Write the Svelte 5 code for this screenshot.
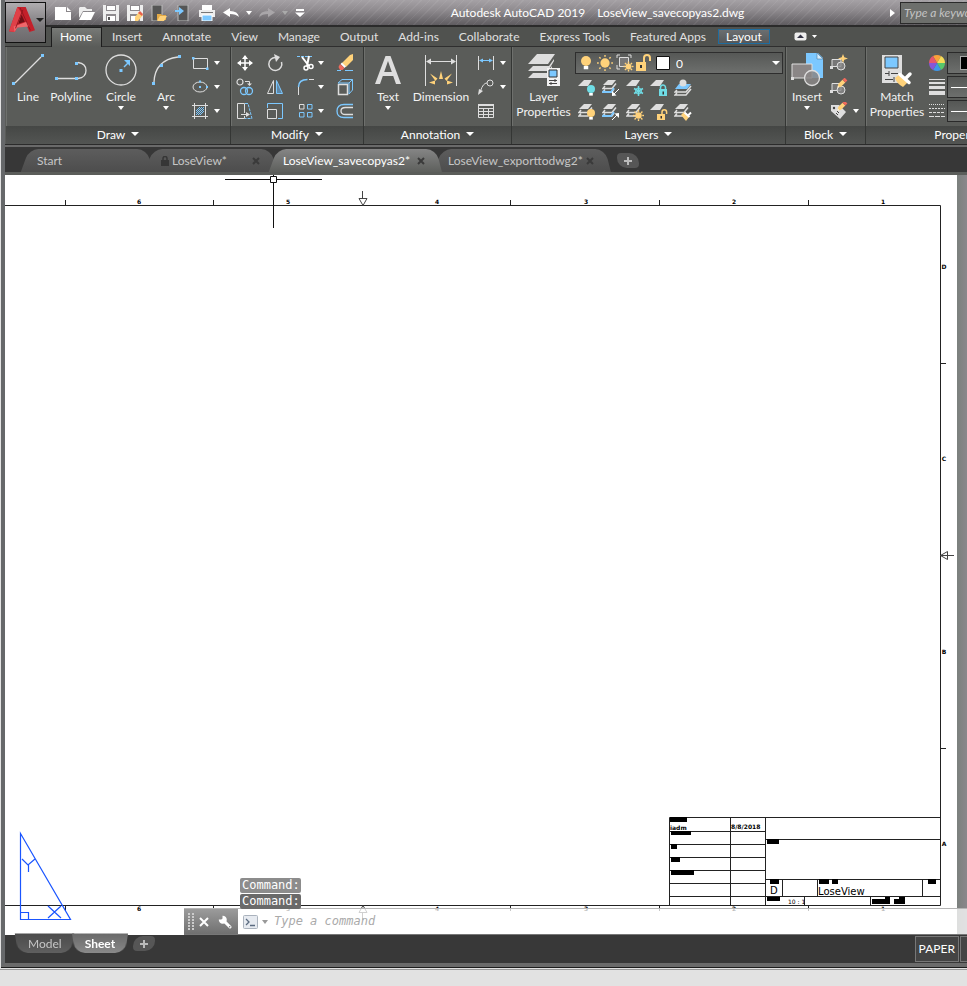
<script>
    const L = "#dedede";
    const B = "#7cc8ff";
    const Y = "#ffd27a";
    const T = "#6fdde6";

    // sheet stack used by most of the layer icons
    const sheets = `<path d="M6 1h8l-4 5H1z" fill="${L}"/><path d="M3 7L1 9.500h9l4-5" fill="none" stroke="${L}" stroke-width="1.500"/><path d="M3 10.500L1 13h9l2-3" fill="none" stroke="${L}" stroke-width="1.500"/>`;
    const sheet = `<path d="M6 1h8l-4 6H0z" fill="${L}"/>`;
    const sunRays = (x, y, r) =>
        [0, 45, 90, 135, 180, 225, 270, 315]
            .map((a) => `<rect x="${x - 0.7}" y="${y - r}" width="1.4" height="1.8" transform="rotate(${a} ${x} ${y})"/>`)
            .join("");
    const sun = (x, y, r) => `<g fill="${Y}"><circle cx="${x}" cy="${y}" r="${r * 0.58}"/>${sunRays(x, y, r)}</g>`;
    const bulb = (x, y, r, c) =>
        `<circle cx="${x}" cy="${y}" r="${r}" fill="${c}"/><rect x="${x - r * 0.45}" y="${y + r}" width="${r * 0.9}" height="${r * 0.65}" fill="#fff"/>`;
    const pencil = (x, y) =>
        `<g transform="translate(${x} ${y}) rotate(45)"><path d="M-2 3h4v6l-2 3-2-3z" fill="${Y}"/><path d="M-2 0h4v3h-4z" fill="#f06a5c"/><path d="M-1 10.500h2L0 12z" fill="#fff"/></g>`;
    const blockShape = `<path d="M2 5.500h9v7H2z" fill="#777" stroke="${L}"/><circle cx="11" cy="12" r="4" fill="#8a8a8a" fill-opacity=".8" stroke="${L}"/><rect x="0" y="12" width="3" height="3" fill="${L}"/>`;

    const small = {
        rect: `<path d="M2.500 4.500h14v10h-14z" fill="none" stroke="${L}"/><path d="M1 3h2.500v2.500H1zM15 13.500h2.500V16H15z" fill="${B}"/>`,
        ellipse: `<ellipse cx="9" cy="9" rx="7" ry="5" fill="none" stroke="${L}"/><path d="M8 2.500h2v2H8zM8 8h2v2H8zM15 8h2v2h-2z" fill="${B}"/>`,
        hatch: `<path d="M1 3.500h16M1 14.500h16M3.500 1v16M14.500 1v16" stroke="${L}"/><path d="M5 9l4-4M5 13l8-8M9 13l4-4M5 11l6-6M7 13l6-6" stroke="${B}"/>`,
        move: `<path d="M9 2v14M2 9h14" stroke="#fff" stroke-width="1.500"/><path d="M9 1l3 4H6zM9 17l3-4H6zM1 9l4-3v6zM17 9l-4-3v6z" fill="#fff"/>`,
        rotate: `<path d="M10 3.500A6.500 6.500 0 1 0 15.500 8" fill="none" stroke="${L}" stroke-width="1.500"/><path d="M8 0l6 3-4 5z" fill="${L}"/>`,
        trim: `<path d="M0 2.500h16" stroke="${B}" stroke-dasharray="3 1"/><path d="M5 3l7 9M12 2l-2 10" stroke="#fff" stroke-width="2"/><circle cx="9" cy="14" r="2" fill="none" stroke="#fff" stroke-width="1.500"/><circle cx="14" cy="12.500" r="2" fill="none" stroke="#fff" stroke-width="1.500"/>`,
        erase: `<path d="M17 0v6l-7 7-4-4 8-8z" fill="${Y}"/><path d="M6 8.500l4 4-1.500 1.500-4-4z" fill="#fff"/><path d="M4 10l4.500 4-2 2H4l-1.500-3z" fill="#f06a5c"/><path d="M1 16.500h4M9 16.500h8" stroke="${B}"/>`,
        copy: `<circle cx="4" cy="4" r="3" fill="none" stroke="${L}" stroke-width="1.200"/><path d="M9 3.500h4.500V6" fill="none" stroke="${L}"/><path d="M11 5.500h5L13.500 8z" fill="${L}"/><g fill="none" stroke="${B}" stroke-width="1.300"><circle cx="8" cy="13" r="3.500"/><circle cx="13" cy="13" r="3.500"/></g>`,
        mirror: `<path d="M7.500 2.500v13H1.500z" fill="none" stroke="${L}"/><path d="M10.500 2.500v13h6z" fill="#5f87a6" stroke="${B}"/>`,
        fillet: `<path d="M1.500 9v8M12 1.500h5" stroke="${L}"/><path d="M1.500 9q0-7.500 9-7.500" fill="none" stroke="${B}" stroke-width="1.500"/>`,
        box: `<path d="M2.500 6.500h9v10h-9z" fill="none" stroke="${L}" stroke-width="1.500"/><path d="M2 5l4-3.500h10.500V12L13 16M2 5h11v11M13 5l3.500-3.500" fill="none" stroke="${B}"/>`,
        stretch: `<path d="M8.500 11V1.500h-7v15h7V14" fill="none" stroke="${L}"/><path d="M5 12.500h6" stroke="${L}"/><path d="M10 10l4 2.500-4 2.500z" fill="${L}"/><path d="M9 1.500h3l4 15H9" fill="none" stroke="${B}" stroke-dasharray="3 1"/>`,
        scale: `<path d="M1.500 6V1.500h15v15H12" fill="none" stroke="${B}"/><path d="M1.500 7.500h9v9h-9z" fill="none" stroke="${L}"/>`,
        array: `<g fill="none"><path d="M2.500 2.500h4.500v4.500h-4.500z" stroke="${L}"/><path d="M10.500 2.500h4.500v4.500h-4.500zM2.500 10.500h4.500v4.500h-4.500zM10.500 10.500h4.500v4.500h-4.500z" stroke="${B}"/></g>`,
        offset: `<path d="M17 2.500H8q-7 0-7 6.500t7 6.500h9" fill="none" stroke="${B}" stroke-width="1.300"/><path d="M17 5.500H9.500Q5 5.500 5 9t4.500 3.500H17" fill="none" stroke="${L}" stroke-width="1.300"/>`,
        linear: `<path d="M1.500 2v14M16.500 2v14" stroke="${L}"/><path d="M3 6.500h12" stroke="${B}"/><path d="M2 6.500l4-2v4zM16 6.500l-4-2v4z" fill="${B}"/>`,
        leader: `<circle cx="13" cy="5" r="3" fill="none" stroke="${L}"/><path d="M10 5Q6 5 3.500 13" fill="none" stroke="${L}"/><path d="M1 17l1-6 4 2z" fill="${L}"/>`,
        table: `<path d="M1.500 2.500h15v13h-15zM1.500 6.500h15M1.500 9.500h15M1.500 12.500h15M6.500 6v9M11.500 6v9" fill="none" stroke="${L}"/><path d="M1 2h16v2H1z" fill="${L}"/>`,
        layOff: `${sheet}${bulb(13, 10, 4, T)}`,
        layIso: `${sheets}<path d="M2 11.500L1 13h8l3-4" fill="none" stroke="${B}" stroke-width="1.800"/><path d="M17 10l-5 5" stroke="#fff"/><path d="M10 17v-5l4.500 4.500z" fill="#fff"/>`,
        layFreeze: `${sheet}<path d="M12.500 7v10M8 9.500l9 5M17 9.500l-9 5" stroke="${T}" stroke-width="1.500"/><circle cx="12.500" cy="12" r="3" fill="none" stroke="${T}"/>`,
        layLock: `${sheet}<path d="M9 10h8v7H9z" fill="${T}"/><path d="M10.500 10V8.500a2.500 2.500 0 0 1 5 0V10" fill="none" stroke="${T}" stroke-width="1.500"/><path d="M12.500 12.500h1.500v3h-1.500z" fill="#333"/>`,
        layCur: `<path d="M5 5h12l-4 5H1z" fill="${B}"/><path d="M3 11l-2 2h11l5-6M3 14l-2 2h11l5-6" fill="none" stroke="${L}" stroke-width="1.500"/><circle cx="9" cy="4" r="3.500" fill="${L}"/>`,
        layOn: `${sheets}${bulb(13, 10, 4, Y)}`,
        layUniso: `${sheets}<path d="M2 11.500L1 13h8l3-4" fill="none" stroke="${B}" stroke-width="1.800"/><path d="M10 17l5-5" stroke="#fff"/><path d="M17 10v5l-4.500-4.500z" fill="#fff"/>`,
        layThaw: `${sheets}${sun(12.5, 12.5, 5.5)}`,
        layUnlock: `${sheet}<path d="M7 11h8v6H7z" fill="${Y}"/><path d="M12 11V9a2.300 2.300 0 0 1 4.600 0v2" fill="none" stroke="${Y}" stroke-width="1.500"/><path d="M10.500 13h1.500v2.500h-1.500z" fill="#333"/>`,
        layMatch: `${sheets}<path d="M7 12l3-3 5 5-3 4z" fill="${Y}"/><path d="M10.500 9.500l5 4.500M14.500 12l2.500-2.500" stroke="#fff" stroke-width="2"/>`,
        blockNew: `${blockShape}<path d="M13 0l1.300 3.200L18 4.500l-3.700 1.300L13 9l-1.300-3.200L8 4.500l3.700-1.300z" fill="${Y}"/>`,
        blockEdit: `${blockShape}${pencil(16, 1)}`,
        blockAttr: `<path d="M1 3h8l7 7-6 7-9-8z" fill="${L}"/><circle cx="4" cy="6" r="1.200" fill="#444"/><path d="M7 9l2 2M6 11l2 2" stroke="#444"/>${pencil(16, 0)}`,
        wheel: [
            ["#f9a13a", 0], ["#f7dc57", 60], ["#e4566e", -60], ["#58c66b", 120], ["#3f97e8", 180], ["#8656d8", 240],
        ].map(([c, a]) => `<path d="M9 9V1a8 8 0 0 1 6.930 4z" fill="${c}" transform="rotate(${a - 30} 9 9)"/>`).join(""),
        weights: `<path d="M1 1h16v1H1zM1 4h16v2H1zM1 8h16v3H1zM1 13h16v4H1z" fill="${L}"/>`,
        types: `<g stroke="${L}" stroke-width="1.200"><path d="M1 2.500h16" stroke-dasharray="1 1"/><path d="M1 6.500h16" stroke-dasharray="2 1"/><path d="M1 10.500h16" stroke-dasharray="3 1"/><path d="M1 14.500h16" stroke-dasharray="5 1"/></g>`,
        bulb: bulb(8, 7, 5, Y),
        sun: sun(8, 9, 8),
        vpSun: `<path d="M1 4V1h3M12 1h3v3M1 11v4h3" fill="none" stroke="${L}"/><path d="M3.500 3.500h9v9h-9z" fill="#777" stroke="${L}"/>${sun(12.5, 12.5, 5)}`,
        unlock: `<path d="M1 8h10v9H1z" fill="${Y}"/><path d="M9 8V4a3 3 0 0 1 6 0v3" fill="none" stroke="${Y}" stroke-width="2"/><path d="M5 11h2v3H5z" fill="#333"/>`,
        swatch: `<path d="M2.500 2.500h13v13h-13z" fill="#fff" stroke="#111"/>`,
    };

    const big = {
        line: `<path d="M3 29L29 3" stroke="${L}" stroke-width="1.300"/><path d="M0 28h3v3H0zM29 0h3v3h-3z" fill="${B}"/>`,
        polyline: `<path d="M3 24.500h17M23 8.500q8 1 8 8t-8 8" fill="none" stroke="${L}" stroke-width="1.300"/><path d="M0 23h3v3H0zM20 23h3v3h-3zM20 8h3v3h-3z" fill="${B}"/>`,
        circle: `<circle cx="16" cy="16" r="15" fill="none" stroke="${L}" stroke-width="1.300"/><path d="M19 13l4-4" stroke="${B}" stroke-width="1.500"/><path d="M25 6v6l-6-6zM14.500 15h3v3h-3z" fill="${B}"/>`,
        arc: `<path d="M4 28Q5 6 28 3" fill="none" stroke="${L}" stroke-width="1.300"/><path d="M2 28h3v3H2zM10 10h3v3h-3zM28 1h3v3h-3z" fill="${B}"/>`,
        text: `<path d="M3 30L13.500 2h5L29 30h-5l-2.800-8H10.800L8 30zM12.200 18h7.600L16 7z" fill="${L}"/>`,
        dimension: `<path d="M.5 1v31M31.500 1v31" stroke="${L}"/><path d="M4 7.500h24" stroke="${L}"/><path d="M1 7.500l5-3v6zM31 7.500l-5-3v6z" fill="${L}"/><g fill="${Y}"><path d="M14 25l2-8 2 8zM10.500 27L5 19.500l7.500 5zM21.500 27l5.500-7.500-7.500 5zM10 30.500l-6-2 6-2zM22 30.500l6-2-6-2z"/></g>`,
        layers: `<path d="M9 0h18l-7 10H0z" fill="${L}"/><path d="M5 12h16l5-7v2l-6 10H0z" fill="${L}"/><path d="M5 19h14l5-7v4l-4 8H0z" fill="${L}"/><path d="M19 14h13v18H19z" fill="#f2f2f2"/><path d="M21 16h8v7h-8z" fill="${B}" stroke="#333"/><path d="M21 26.500h8M21 29.500h8M27 25v3M23 28v3" stroke="#444"/>`,
        insert: `<path d="M15-1h12l5 5v20H15z" fill="${B}"/><path d="M26-1v6h6z" fill="#d9efff" stroke="#4a7aa0" stroke-width=".6"/><path d="M1 10h20v14H1z" fill="#8a8686" stroke="${L}"/><circle cx="21" cy="24" r="7.500" fill="#8a8686" fill-opacity=".85" stroke="${L}" stroke-width="1.300"/><path d="M0 23h3v3H0z" fill="${L}"/>`,
        match: `<path d="M1 1h20v28H1z" fill="${L}"/><path d="M4 3h13v11H4z" fill="${B}" stroke="#444"/><path d="M4 19.500h4M10 19.500h7M4 25.500h8M8 17v5M13 23v5" stroke="#444"/><path d="M14 24l5-4 8 8-5 5q-6-3-8-9z" fill="${Y}"/><path d="M19 20.500l9 8M25 24l4-4" stroke="#fff" stroke-width="3.500" stroke-linecap="round"/>`,
    };

    const qat = {
        New: `<path d="M0 2h11v5h5v8H0z" fill="#fff"/><path d="M12 2l4 4h-4z" fill="#fff"/>`,
        Open: `<path d="M0 3l1-1h5l2 2h5v2H4L0 13z" fill="#eee"/><path d="M4 7h12l-4 8H0z" fill="#fff"/>`,
        Save: `<path d="M0 0h16v16H0z" fill="#eee"/><path d="M3 0h10v6H3zM3 9h10v7H3z" fill="#8e8a8e"/><path d="M4 1h8v4H4zM4 11h8v5H4z" fill="#fff"/><path d="M5 12h2v3H5z" fill="#555"/>`,
        "Save As": `<path d="M0 0h16v16H0z" fill="#eee"/><path d="M3 0h10v6H3zM3 9h10v7H3z" fill="#8e8a8e"/><path d="M4 1h8v4H4zM4 11h6v5H4z" fill="#fff"/><path d="M12 7l4 3-5 6H8v-4z" fill="${Y}"/><path d="M13 6l3 3-1 2-4-3z" fill="#e8604c"/>`,
        "Open from Mobile": `<path d="M1 0h10v16H1z" fill="#555" stroke="#bbb"/><path d="M6 9h4l1 1h4v5H6z" fill="#e3a945"/><path d="M9 11h7l-3 5H6z" fill="${Y}"/>`,
        "Save to Mobile": `<path d="M3 0h10v16H3z" fill="#555" stroke="#bbb"/><path d="M0 5h4V2l5 4-5 4V7H0z" fill="${B}"/>`,
        Plot: `<path d="M3 0h10v5H3z" fill="#fff"/><path d="M0 5h16v7H0z" fill="#eee"/><path d="M2 7h12v1H2z" fill="#777"/><path d="M3 10h10v6H3z" fill="${B}" stroke="#fff"/>`,
        Undo: `<path d="M7 3v3q8 0 9 6-3-3-9-3v3L0 7.500z" fill="#fff"/>`,
        Redo: `<path d="M9 3v3q-8 0-9 6 3-3 9-3v3l7-4.500z" fill="#a9a6a9"/>`,
    };

    const menuTabs = ["Home", "Insert", "Annotate", "View", "Manage", "Output", "Add-ins", "Collaborate", "Express Tools", "Featured Apps", "Layout"];
    const fileTabs = [
        { name: "Start" },
        { name: "LoseView*", locked: true, closable: true },
        { name: "LoseView_savecopyas2*", active: true, closable: true },
        { name: "LoseView_exporttodwg2*", closable: true },
    ];

    // name, label, has a drop-down arrow
    const drawTools = [["rect", "Rectangle", 1], ["ellipse", "Ellipse", 1], ["hatch", "Hatch", 1]];
    const modifyTools = [
        ["move", "Move"], ["rotate", "Rotate"], ["trim", "Trim", 1], ["erase", "Erase"],
        ["copy", "Copy"], ["mirror", "Mirror"], ["fillet", "Fillet", 1], ["box", "Explode"],
        ["stretch", "Stretch"], ["scale", "Scale"], ["array", "Array", 1], ["offset", "Offset"],
    ];
    const annotationTools = [["linear", "Linear", 1], ["leader", "Leader", 1], ["table", "Table"]];
    const layerTools = [
        ["layOff", "Off"], ["layIso", "Isolate"], ["layFreeze", "Freeze"], ["layLock", "Lock"], ["layCur", "Make Current"],
        ["layOn", "Turn All On"], ["layUniso", "Unisolate"], ["layThaw", "Thaw"], ["layUnlock", "Unlock"], ["layMatch", "Match Layer"],
    ];
    const blockTools = [["blockNew", "Create"], ["blockEdit", "Edit"], ["blockAttr", "Edit Attributes", 1]];

    const zonesX = [[139, "6"], [288, "5"], [437, "4"], [586, "3"], [734, "2"], [883, "1"]];
    const ticksX = [66, 214, 511, 660, 809];
    const zonesY = [[267, "D"], [459, "C"], [652, "B"], [844, "A"]];
    const blackouts = [
        [670, 817, 17, 5], [671, 831, 20, 4], [671, 844, 6, 5], [671, 857, 9, 5], [671, 870, 23, 5],
        [767, 839, 12, 5], [770, 879, 9, 5], [819, 879, 10, 5], [832, 879, 6, 5], [928, 879, 8, 5],
        [767, 897, 13, 4], [872, 899, 18, 5], [885, 897, 5, 3], [894, 899, 11, 5], [899, 897, 6, 3],
    ];
</script>

{#snippet arrow()}
    <svg class="arrow" viewBox="0 0 6 4" aria-hidden="true"><path d="M0 0h6L3 4z" /></svg>
{/snippet}

{#snippet smallIcon(name)}
    <svg class="icon" viewBox="0 0 18 18" aria-hidden="true">{@html small[name]}</svg>
{/snippet}

{#snippet tool([name, label, menu])}
    <button class="tool" aria-label={label}>
        {@render smallIcon(name)}
        {#if menu}{@render arrow()}{/if}
    </button>
{/snippet}

{#snippet bigTool(name, label, menu)}
    <button class="big">
        <svg viewBox="0 0 32 32" aria-hidden="true">{@html big[name]}</svg>
        <span>{label}</span>
        {#if menu}{@render arrow()}{/if}
    </button>
{/snippet}

{#snippet panelTitle(label)}
    <button class="panel-title">{label}<svg viewBox="0 0 8 4" aria-hidden="true"><path d="M0 0h8L4 4z" /></svg></button>
{/snippet}

<div class="page">
    <div class="window">
        <header class="title-bar">
            <div class="qat">
                {#each Object.entries(qat) as [label, art]}
                    <button class="qat-button" aria-label={label}>
                        <svg viewBox="0 0 16 16" aria-hidden="true">{@html art}</svg>
                    </button>
                    {#if label == "Undo" || label == "Redo"}
                        <button class="qat-arrow" class:dim={label == "Redo"} aria-label="{label} list">{@render arrow()}</button>
                    {/if}
                {/each}
                <button class="qat-menu" aria-label="Customize toolbar">
                    <svg viewBox="0 0 10 8" aria-hidden="true"><path d="M1 0h8v2H1zM0 3.500h10L5 8z" fill="#fff" /></svg>
                </button>
            </div>
            <h1><span>Autodesk AutoCAD 2019</span><span>LoseView_savecopyas2.dwg</span></h1>
            <svg class="play" viewBox="0 0 5 8" aria-hidden="true"><path d="M0 0l5 4-5 4z" fill="#fff" /></svg>
            <input class="search" type="text" aria-label="Search" placeholder="Type a keyword or phrase" />
        </header>

        <button class="app-button" aria-label="Application menu">
            <svg viewBox="0 0 28 30" aria-hidden="true">
                <path d="M9 1h9l10 25-6 2-3-7-10 2-3 5-6-1z" fill="#c4202a" />
                <path d="M13 8l4 9-7 2z" fill="#6e1016" />
                <path d="M9 1L0 27l6 1 8-20z" fill="#e04048" />
                <path d="M5 22l14-5 3 5-13 1-3 5z" fill="#f0666a" />
                <path d="M12 2l11 24M15 4l-8 20" stroke="#8f151d" stroke-width="1" />
            </svg>
            <svg class="app-arrow" viewBox="0 0 8 4" aria-hidden="true"><path d="M0 0h8L4 4z" /></svg>
        </button>

        <nav class="menu">
            {#each menuTabs as tab}
                <button class:home={tab == "Home"} class:context={tab == "Layout"}>{tab}</button>
            {/each}
            <button class="minimize" aria-label="Minimize ribbon">
                <svg viewBox="0 0 24 9" aria-hidden="true">
                    <rect x=".5" y=".5" width="12" height="8" rx="2" fill="#eee" />
                    <path d="M3 6h7L6.500 2.500z" fill="#334" />
                    <path d="M18 3h5l-2.500 3z" fill="#fff" />
                </svg>
            </button>
        </nav>

        <div class="ribbon">
            <section class="panel draw">
                <div class="body">
                    {@render bigTool("line", "Line")}
                    {@render bigTool("polyline", "Polyline")}
                    {@render bigTool("circle", "Circle", true)}
                    {@render bigTool("arc", "Arc", true)}
                    <div class="tools">
                        {#each drawTools as item}{@render tool(item)}{/each}
                    </div>
                </div>
                {@render panelTitle("Draw")}
            </section>
            <section class="panel modify">
                <div class="body">
                    {#each modifyTools as item}{@render tool(item)}{/each}
                </div>
                {@render panelTitle("Modify")}
            </section>
            <section class="panel annotation">
                <div class="body">
                    {@render bigTool("text", "Text", true)}
                    {@render bigTool("dimension", "Dimension")}
                    <div class="tools">
                        {#each annotationTools as item}{@render tool(item)}{/each}
                    </div>
                </div>
                {@render panelTitle("Annotation")}
            </section>
            <section class="panel layers">
                <div class="body">
                    {@render bigTool("layers", "Layer Properties")}
                    <div>
                        <div class="combo">
                            {#each ["bulb", "sun", "vpSun", "unlock", "swatch"] as name}{@render smallIcon(name)}{/each}
                            <select aria-label="Layer"><option>0</option></select>
                            <svg class="combo-arrow" viewBox="0 0 8 4" aria-hidden="true"><path d="M0 0h8L4 4z" /></svg>
                        </div>
                        <div class="layer-tools">
                            {#each layerTools as item}{@render tool(item)}{/each}
                        </div>
                    </div>
                </div>
                {@render panelTitle("Layers")}
            </section>
            <section class="panel block">
                <div class="body">
                    {@render bigTool("insert", "Insert", true)}
                    <div class="tools">
                        {#each blockTools as item}{@render tool(item)}{/each}
                    </div>
                </div>
                {@render panelTitle("Block")}
            </section>
            <section class="panel properties">
                <div class="body">
                    {@render bigTool("match", "Match Properties")}
                    <div class="tools">
                        {#each ["wheel", "weights", "types"] as name}
                            <div class="prop">
                                {@render smallIcon(name)}
                                <button class="prop-box" class:color={name == "wheel"} aria-label={name}><i></i></button>
                            </div>
                        {/each}
                    </div>
                </div>
                {@render panelTitle("Properties")}
            </section>
        </div>

        <nav class="file-tabs">
            {#each fileTabs as tab}
                <div class="file-tab" class:active={tab.active} class:locked={tab.locked}>
                    {#if tab.locked}
                        <svg class="lock" viewBox="0 0 8 10" aria-hidden="true">
                            <path d="M0 4h8v6H0z" fill="#363636" /><path d="M2 4V2.500a2 2 0 0 1 4 0V4" fill="none" stroke="#363636" stroke-width="1.500" />
                        </svg>
                    {/if}
                    <button class="file-name">{tab.name}</button>
                    {#if tab.closable}
                        <button class="close" aria-label="Close {tab.name}">
                            <svg viewBox="0 0 8 8" aria-hidden="true"><path d="M1 1l6 6M7 1l-6 6" stroke="#3a3a3a" stroke-width="2" /></svg>
                        </button>
                    {/if}
                </div>
            {/each}
            <button class="plus" aria-label="New drawing"><svg viewBox="0 0 8 8" aria-hidden="true"><path d="M4 0v8M0 4h8" stroke="#bbb" stroke-width="2" /></svg></button>
        </nav>

        <main class="canvas">
            <svg class="sheet" viewBox="5 175 952 760" aria-label="Drawing sheet">
                <g fill="none" stroke="#222">
                    <path d="M5 205.500h935.500V905.500H5" />
                    {#each ticksX as x}
                        <path d="M{x - 0.5} 200v5M{x - 0.5} 906v5" />
                    {/each}
                    <path d="M941 363.500h5M941 748.500h5" />
                    <path d="M669.500 905V817.500H940M669.500 831.500h96M669.500 844.500h96M669.500 857.500h96M669.500 870.500h96M669.500 883.500h96M669.500 896.500H940M730.500 818v87M765.500 818v87M766 839.500h174M766 879.500h174M782.500 880v16M817.500 880v16M922.500 880v16M804.500 897v8M870.500 897v8" />
                </g>
                <g fill="none" stroke="#444">
                    <path d="M362.500 191v8M359 198.500h8l-4 7z" />
                    <path d="M362.500 920v-8M359 912.500h8l-4-7z" />
                    <path d="M954 555.500h-14M947.500 551.500v8l-7-4z" />
                </g>
                <g class="zone">
                    {#each zonesX as [x, label]}
                        <text x={x} y="204">{label}</text>
                        <text x={x} y="911">{label}</text>
                    {/each}
                    {#each zonesY as [y, label]}
                        <text x="944" y={y + 2}>{label}</text>
                    {/each}
                </g>
                {#each blackouts as [x, y, w, h]}
                    <rect {x} {y} width={w} height={h} />
                {/each}
                <text class="cad tiny" x="670" y="830">iadm</text>
                <text class="cad tiny" x="731" y="829">8/8/2018</text>
                <text class="cad tiny plain" x="788" y="904">10 : 1</text>
                <text class="cad" x="770" y="894">D</text>
                <text class="cad" x="818" y="895">LoseView</text>
                <g fill="none" stroke="#1a55ff" stroke-width="1.200">
                    <path d="M20.500 833.500L70.500 919.500H20.500zM20.500 912.500h8v7M22 859l6 6 7-6M28.500 865v7M48 906l13 12M61 906l-13 12" />
                </g>
                <path d="M225 179.500h97M273.500 175v53" stroke="#111" />
                <path d="M270.500 176.500h6v6h-6z" fill="#fff" stroke="#111" />
            </svg>
            <div class="scrollbar"></div>

            <div class="command">
                <div class="history">
                    <span>Command:</span>
                    <span class="last">Command:</span>
                </div>
                <div class="command-line">
                    <div class="grip">
                        <svg class="dots" viewBox="0 0 6 18" aria-hidden="true"><path d="M1 0v18M5 0v18" stroke="#ccc" stroke-width="2" stroke-dasharray="2 1" /></svg>
                        <button aria-label="Close command line"><svg viewBox="0 0 10 10" aria-hidden="true"><path d="M1 1l8 8M9 1L1 9" stroke="#fff" stroke-width="2" /></svg></button>
                        <button class="wrench" aria-label="Customize">
                            <svg viewBox="0 0 14 14" aria-hidden="true"><path d="M5 5l7 7" stroke="#fff" stroke-width="3" stroke-linecap="round" /><path d="M4.500 4.500V.8A4 4 0 1 1 .8 4.500z" fill="#fff" /><circle cx="11.700" cy="11.700" r=".8" fill="#777" /></svg>
                        </button>
                    </div>
                    <button class="prompt" aria-label="Recent commands">
                        <svg class="term" viewBox="0 0 15 14" aria-hidden="true"><rect x=".5" y=".5" width="14" height="13" rx="1" fill="#e6eaf0" stroke="#aab2bd" /><path d="M3 4l3 3-3 3M7 10.500h5" fill="none" stroke="#5b6b80" stroke-width="1.300" /></svg>
                        {@render arrow()}
                    </button>
                    <input type="text" aria-label="Command" placeholder="Type a command" />
                </div>
            </div>
        </main>

        <footer class="layout-bar">
            <div class="layout-tabs">
                <button class="layout-tab">Model</button>
                <button class="layout-tab active">Sheet</button>
                <button class="plus low" aria-label="New layout"><svg viewBox="0 0 8 8" aria-hidden="true"><path d="M4 0v8M0 4h8" stroke="#bbb" stroke-width="2" /></svg></button>
            </div>
            <div class="status">
                <button>PAPER</button>
                <button class="cut" aria-label="Quick view"></button>
            </div>
        </footer>
    </div>
    <div class="desktop"></div>
</div>

<style>
    :global(body) {
        margin: 0;
        background: #e2e2e2;
    }
    .page {
        display: flex;
        flex-direction: column;
        min-height: 100vh;
        overflow: hidden;
        font-family: Lato, "Open Sans", sans-serif;
        font-size: 12px;
        color: #eee;
    }
    .window {
        position: relative;
        flex: 1;
        display: flex;
        flex-direction: column;
        border-left: 4px solid #66686a;
        border-bottom: 4px solid #6b6b6b;
        box-shadow: 0 1px 0 #1c1c1c, inset 1px 0 0 #2b2b2b;
        margin-left: 1px;
        min-width: 0;
    }
    .desktop {
        height: 16px;
        margin-top: 2px;
        border-top: 1px solid #999;
        background: #e2e2e2;
    }
    button,
    input,
    select {
        font: inherit;
        color: inherit;
        background: none;
        border: 0;
        padding: 0;
        margin: 0;
    }
    svg {
        display: block;
        flex: none;
    }
    .arrow {
        width: 6px;
        height: 4px;
        fill: #fff;
    }

    .title-bar {
        display: flex;
        align-items: center;
        height: 25px;
        padding-left: 50px;
        border-bottom: 2px solid #2b2b2b;
        background:
            repeating-linear-gradient(135deg, rgba(255, 255, 255, 0.06) 0 1px, transparent 1px 6px),
            linear-gradient(#a5a1a5, #8f8b8f 40%, #5f5c60);
    }
    .qat {
        display: flex;
        align-items: center;
        gap: 8px;
    }
    .qat-button svg {
        width: 16px;
        height: 16px;
    }
    .qat-arrow {
        margin: 0 -1px;
    }
    .dim .arrow {
        fill: #aaa;
    }
    .qat-menu svg {
        width: 10px;
        height: 8px;
    }
    h1 {
        flex: 1;
        display: flex;
        justify-content: center;
        gap: 12px;
        margin: 0;
        font-size: 12px;
        font-weight: 400;
        white-space: nowrap;
        color: #fff;
    }
    .play {
        width: 5px;
        height: 8px;
        margin-right: 5px;
    }
    .search {
        box-sizing: border-box;
        width: 67px;
        height: 22px;
        padding-left: 3px;
        border: 1px solid #2a2a2a;
        border-right: 0;
        background: #6d6f6c;
        font-style: italic;
    }
    .search::placeholder {
        color: #c4c4c4;
        opacity: 1;
    }
    .app-button {
        position: absolute;
        left: 0;
        top: 2px;
        z-index: 2;
        display: flex;
        align-items: center;
        gap: 1px;
        box-sizing: border-box;
        width: 41px;
        height: 41px;
        padding: 0 2px 6px 3px;
        border: 1px solid #111;
        background: linear-gradient(#b0adb0, #7c797c 60%, #6c6a6c);
    }
    .app-button svg {
        width: 26px;
        height: 28px;
    }
    .app-button .app-arrow {
        width: 8px;
        height: 4px;
        fill: #222;
    }

    .menu {
        display: flex;
        align-items: center;
        height: 19px;
        padding-left: 46px;
        background: #50524f;
        border-bottom: 1px solid #2f2f2f;
        white-space: nowrap;
    }
    .menu button {
        height: 18px;
        padding: 0 10px;
        color: #e0e0e0;
    }
    .menu .home {
        height: 20px;
        padding: 0 9px 2px 8px;
        border: 1px solid #1d1d1d;
        border-bottom: 0;
        background: linear-gradient(#777976, #5a5c59);
        color: #fff;
    }
    .menu .context {
        height: 15px;
        line-height: 13px;
        margin: 0 2px;
        padding: 0 7px;
        border: 1px solid #1f6c9e;
        background: linear-gradient(#6b6e70, #55585a);
        color: #fff;
    }
    .menu .minimize {
        padding: 0 22px;
    }
    .minimize svg {
        width: 24px;
        height: 9px;
    }

    .ribbon {
        display: flex;
        height: 97px;
        padding-left: 1px;
        overflow: hidden;
        background: #5a5c59;
        border-bottom: 1px solid #2b2b2b;
    }
    .panel {
        flex: none;
        display: flex;
        flex-direction: column;
        box-sizing: border-box;
        border-right: 1px solid #343634;
        box-shadow: inset 1px 0 0 #6e706d;
    }
    .body {
        flex: 1;
        display: grid;
        align-content: start;
    }
    .panel-title {
        display: flex;
        align-items: center;
        justify-content: center;
        gap: 6px;
        box-sizing: border-box;
        height: 18px;
        padding-bottom: 2px;
        background: linear-gradient(#454745, #535553);
        color: #fff;
    }
    .panel-title svg {
        width: 8px;
        height: 4px;
        fill: #fff;
    }
    .draw {
        width: 225px;
    }
    .draw .body {
        grid-template-columns: 36px 50px 50px 40px 34px;
        padding-left: 4px;
    }
    .draw .tools {
        padding-left: 5px;
    }
    .modify {
        width: 133px;
    }
    .modify .body {
        grid-template-columns: 30px 31px 39px 18px;
        padding: 4px 0 0 5px;
    }
    .annotation {
        width: 148px;
    }
    .annotation .body {
        grid-template-columns: 40px 66px 34px;
        padding-left: 4px;
    }
    .annotation .tools,
    .block .tools {
        padding-left: 3px;
    }
    .layers {
        width: 274px;
    }
    .layers .body {
        grid-template-columns: 63px 1fr;
    }
    .block {
        width: 80px;
    }
    .block .body {
        grid-template-columns: 40px 34px;
        padding-left: 1px;
    }
    .properties {
        width: 206px;
    }
    .properties .body {
        grid-template-columns: 62px 1fr;
    }
    .big {
        display: flex;
        flex-direction: column;
        align-items: center;
        padding-top: 7px;
        line-height: 15px;
        color: #f2f2f2;
    }
    .big svg:first-child {
        width: 32px;
        height: 32px;
        margin-bottom: 3px;
        overflow: visible;
    }
    .big .arrow {
        margin-top: 2px;
    }
    .tools {
        padding-top: 4px;
    }
    .tool {
        display: flex;
        align-items: center;
        gap: 5px;
        height: 24px;
    }
    .modify .tool {
        gap: 3px;
    }
    .icon {
        width: 18px;
        height: 18px;
    }
    .combo {
        display: flex;
        align-items: center;
        gap: 1px;
        box-sizing: border-box;
        width: 208px;
        height: 22px;
        margin: 5px 0 2px;
        padding: 0 2px;
        border: 1px solid #2e2e2e;
        background: linear-gradient(#565856, #6d6f6d);
    }
    .combo select {
        appearance: none;
        flex: 1;
        padding-left: 3px;
        color: #fff;
    }
    .combo-arrow {
        width: 8px;
        height: 4px;
        fill: #fff;
    }
    .layer-tools {
        display: grid;
        grid-template-columns: repeat(5, 24px);
        padding-left: 3px;
    }
    .prop {
        display: flex;
        align-items: center;
        gap: 1px;
        height: 24px;
    }
    .prop-box {
        display: flex;
        align-items: center;
        box-sizing: border-box;
        width: 124px;
        height: 22px;
        padding-left: 3px;
        border: 1px solid #2a2a2a;
        background: linear-gradient(#555755, #6d6f6d);
    }
    .prop-box i {
        width: 100px;
        height: 1px;
        background: #fff;
    }
    .prop-box.color {
        padding-left: 12px;
    }
    .color i {
        width: 12px;
        height: 12px;
        border: 1px solid #aaa;
        background: #000;
    }

    .file-tabs {
        display: flex;
        align-items: flex-end;
        height: 25px;
        padding-left: 22px;
        border-top: 2px solid #6a6a6a;
        border-bottom: 3px solid #5b5d5a;
        background: #373737;
    }
    .file-tab {
        position: relative;
        z-index: 0;
        display: flex;
        align-items: center;
        box-sizing: border-box;
        width: 124px;
        height: 23px;
        padding: 0 15px 0 10px;
        color: #c6c6c6;
    }
    .file-tab:nth-child(n + 3) {
        width: 169px;
        padding-left: 8px;
    }
    .file-tab::before,
    .file-tab::after {
        content: "";
        position: absolute;
        z-index: -1;
        top: 0;
        bottom: 0;
        background: linear-gradient(#5d5d5d, #4d4d4d);
    }
    .file-tab::before {
        left: -2px;
        right: 50%;
        border-radius: 9px 0 0 0;
        transform: skewX(-20deg);
    }
    .file-tab::after {
        left: 40%;
        right: 1px;
        border-radius: 0 10px 0 0;
        transform: skewX(14deg);
    }
    .file-tab.active {
        z-index: 1;
        width: 165px;
        color: #fff;
    }
    .active::before,
    .active::after {
        background: linear-gradient(#858585, #5d5f5c);
    }
    .lock {
        width: 8px;
        height: 10px;
        margin-right: 3px;
    }
    .close {
        margin-left: auto;
    }
    .close svg,
    .plus svg {
        width: 8px;
        height: 8px;
    }
    .plus {
        display: grid;
        place-items: center;
        width: 22px;
        height: 15px;
        margin: 0 0 4px 8px;
        border-radius: 4px 10px 4px 10px;
        background: #565656;
    }

    .canvas {
        position: relative;
        flex: 1;
        display: flex;
        align-items: flex-start;
        background: #fff;
    }
    .sheet {
        flex: 1;
        min-width: 0;
    }
    .zone text {
        font: 700 6px "DejaVu Sans", sans-serif;
        text-anchor: middle;
        fill: #000;
    }
    .cad {
        font: 10px "DejaVu Sans", sans-serif;
        fill: #000;
    }
    .cad.tiny {
        font-size: 6px;
        font-weight: 700;
    }
    .cad.plain {
        font-weight: 400;
    }
    .scrollbar {
        align-self: stretch;
        width: 10px;
        background: linear-gradient(90deg, #7b807d, #8a878b);
    }
    .command {
        position: absolute;
        left: 179px;
        right: 0;
        bottom: 0;
        font-family: "DejaVu Sans Mono", monospace;
    }
    .history {
        display: flex;
        flex-direction: column;
        align-items: flex-start;
        padding-left: 56px;
    }
    .history span {
        height: 15px;
        line-height: 15px;
        margin-bottom: 1px;
        padding: 0 1px 0 2px;
        border-radius: 2px;
        background: #8c8c8c;
        color: #fff;
    }
    .history .last {
        margin-bottom: -1px;
        z-index: 1;
        background: #6a6a6a;
    }
    .command-line {
        display: flex;
        box-sizing: border-box;
        height: 27px;
        border-top: 1px solid #b5b5b5;
        border-bottom: 1px solid #777;
        background: rgba(255, 255, 255, 0.75);
    }
    .grip {
        display: flex;
        align-items: center;
        gap: 9px;
        box-sizing: border-box;
        width: 54px;
        padding-left: 4px;
        background: linear-gradient(#9b9b9b, #707070);
    }
    .grip .dots {
        width: 6px;
        height: 18px;
        margin-right: -4px;
    }
    .grip button svg {
        width: 10px;
        height: 10px;
    }
    .grip .wrench svg {
        width: 14px;
        height: 14px;
    }
    .prompt {
        display: flex;
        align-items: center;
        gap: 4px;
        padding: 0 6px 0 5px;
    }
    .prompt .arrow {
        fill: #999;
    }
    .term {
        width: 15px;
        height: 14px;
    }
    .command-line input {
        flex: 1;
        min-width: 0;
        padding-bottom: 2px;
        font-style: italic;
        color: #555;
    }
    .command-line input::placeholder {
        color: #aaa;
        opacity: 1;
    }

    .layout-bar {
        display: flex;
        justify-content: space-between;
        height: 28px;
        background: #383838;
    }
    .layout-tabs {
        display: flex;
        padding-left: 11px;
    }
    .layout-tab {
        position: relative;
        z-index: 0;
        height: 18px;
        margin: 0 2px;
        padding: 0 9px 2px 10px;
        color: #c6c6c6;
    }
    .layout-tab::before {
        content: "";
        position: absolute;
        z-index: -1;
        inset: 0;
        border-radius: 0 0 10px 10px;
        background: linear-gradient(#4c4c4c, #5f5f5f);
        transform: perspective(40px) rotateX(-14deg);
        transform-origin: bottom;
    }
    .layout-tab.active {
        font-weight: 700;
        color: #fff;
    }
    .layout-tab.active::before {
        background: linear-gradient(#6a6a6a, #8a8a8a);
    }
    .plus.low {
        margin: 1px 0 0 7px;
        border-radius: 10px 4px 10px 4px;
    }
    .status {
        display: flex;
        gap: 1px;
        padding: 1px 0;
    }
    .status button {
        padding: 0 3px 2px;
        border: 1px solid #777;
        background: #444;
        color: #fff;
    }
    .status .cut {
        box-sizing: border-box;
        width: 6px;
        border-right: 0;
    }
</style>
